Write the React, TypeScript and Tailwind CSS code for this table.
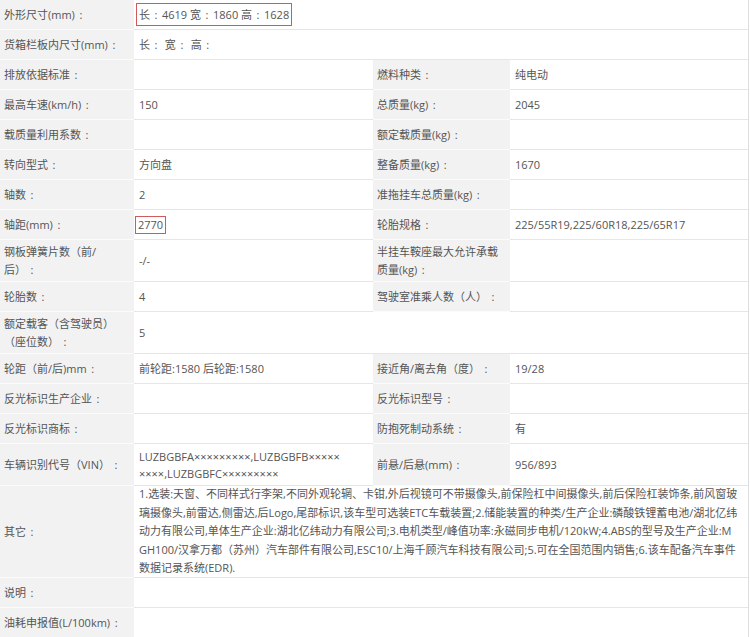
import * as React from 'react';

type Cell = { label?: React.ReactNode; value?: React.ReactNode };

// full-width colon rendered centred, the way the source font draws it
function fw(node: React.ReactNode): React.ReactNode {
  if (typeof node !== 'string') return node;
  const parts = node.split('：');
  return parts.map((p, i) => (
    <React.Fragment key={i}>
      {p}
      {i < parts.length - 1 && <span className="inline-block w-[12px] text-center">:</span>}
    </React.Fragment>
  ));
}

function Label({ children, w = 'w-[134px]' }: { children?: React.ReactNode; w?: string }) {
  return (
    <div className={`${w} shrink-0 flex items-center bg-[#f2f2f2] border-b border-[#fbfbfb] pl-[4px] pr-[2px] leading-[18px]`}>
      <div>{fw(children)}</div>
    </div>
  );
}

function Value({ children, w }: { children?: React.ReactNode; w: string }) {
  return (
    <div className={`${w} shrink-0 flex items-center bg-white border-b border-[#e6e6e6] pl-[5px] leading-[17px]`}>
      <div>{fw(children)}</div>
    </div>
  );
}

function Row({ h, left, right }: { h: string; left: Cell; right?: Cell }) {
  return (
    <div className={`flex ${h}`}>
      <Label>{left.label}</Label>
      {right ? (
        <>
          <Value w="w-[239px]">{left.value}</Value>
          <Label w="w-[137px]">{right.label}</Label>
          <Value w="w-[238px]">{right.value}</Value>
        </>
      ) : (
        <Value w="w-[614px]">{left.value}</Value>
      )}
    </div>
  );
}

const other = [
  '1.选装:天窗、不同样式行李架,不同外观轮辋、卡钳,外后视镜可不带摄像头,前保险杠中间摄像头,前后保险杠装饰条,前风窗玻',
  '璃摄像头,前雷达,侧雷达,后Logo,尾部标识,该车型可选装ETC车载装置;2.储能装置的种类/生产企业:磷酸铁锂蓄电池/湖北亿纬',
  '动力有限公司,单体生产企业:湖北亿纬动力有限公司;3.电机类型/峰值功率:永磁同步电机/120kW;4.ABS的型号及生产企业:M',
  'GH100/汉拿万都（苏州）汽车部件有限公司,ESC10/上海千顾汽车科技有限公司;5.可在全国范围内销售;6.该车配备汽车事件',
  '数据记录系统(EDR).',
];

export default function App() {
  return (
    <div className="w-[750px] h-[637px] overflow-hidden bg-white text-[11px] text-[#555] font-['Open_Sans','Noto_Sans_CJK_SC',sans-serif]">
      <div className="w-[749px] border-r border-[#dedede]">
        <Row
          h="h-[30px]"
          left={{
            label: '外形尺寸(mm)：',
            value: (
              <span className="-ml-[3px] inline-block border border-[#d05a5a] px-[2px] py-[2px] leading-[17px]">
                {fw('长：4619 宽：1860 高：1628')}
              </span>
            ),
          }}
        />
        <Row h="h-[30px]" left={{ label: '货箱栏板内尺寸(mm)：', value: '长： 宽： 高：' }} />
        <Row h="h-[30px]" left={{ label: '排放依据标准：' }} right={{ label: '燃料种类：', value: '纯电动' }} />
        <Row h="h-[30px]" left={{ label: '最高车速(km/h)：', value: '150' }} right={{ label: '总质量(kg)：', value: '2045' }} />
        <Row h="h-[30px]" left={{ label: '载质量利用系数：' }} right={{ label: '额定载质量(kg)：' }} />
        <Row h="h-[30px]" left={{ label: '转向型式：', value: '方向盘' }} right={{ label: '整备质量(kg)：', value: '1670' }} />
        <Row h="h-[30px]" left={{ label: '轴数：', value: '2' }} right={{ label: '准拖挂车总质量(kg)：' }} />
        <Row
          h="h-[30px]"
          left={{
            label: '轴距(mm)：',
            value: <span className="-ml-[4px] inline-block border border-[#d05a5a] px-[2px] leading-[16px]">2770</span>,
          }}
          right={{ label: '轮胎规格：', value: '225/55R19,225/60R18,225/65R17' }}
        />
        <Row
          h="h-[42px]"
          left={{ label: <>钢板弹簧片数（前/<br />后）{fw('：')}</>, value: '-/-' }}
          right={{ label: <>半挂车鞍座最大允许承载<br />质量(kg){fw('：')}</> }}
        />
        <Row h="h-[30px]" left={{ label: '轮胎数：', value: '4' }} right={{ label: '驾驶室准乘人数（人）：' }} />
        <Row h="h-[42px]" left={{ label: <>额定载客（含驾驶员）<br />（座位数）{fw('：')}</>, value: '5' }} />
        <Row h="h-[30px]" left={{ label: '轮距（前/后)mm：', value: '前轮距:1580 后轮距:1580' }} right={{ label: '接近角/离去角（度）：', value: '19/28' }} />
        <Row h="h-[30px]" left={{ label: '反光标识生产企业：' }} right={{ label: '反光标识型号：' }} />
        <Row h="h-[30px]" left={{ label: '反光标识商标：' }} right={{ label: '防抱死制动系统：', value: '有' }} />
        <Row
          h="h-[42px]"
          left={{
            label: '车辆识别代号（VIN）：',
            value: <>LUZBGBFA×××××××××,LUZBGBFB×××××<br />××××,LUZBGBFC×××××××××</>,
          }}
          right={{ label: '前悬/后悬(mm)：', value: '956/893' }}
        />
        <div className="flex h-[92px]">
          <Label>其它：</Label>
          <div className="w-[614px] shrink-0 flex items-center bg-white border-b border-[#e6e6e6] pl-[5px] leading-[18.5px]">
            <div>
              {other.map((l, i) => (
                <div key={i} className="whitespace-nowrap">{l}</div>
              ))}
            </div>
          </div>
        </div>
        <Row h="h-[30px]" left={{ label: '说明：' }} />
        <Row h="h-[30px]" left={{ label: '油耗申报值(L/100km)：' }} />
      </div>
    </div>
  );
}
